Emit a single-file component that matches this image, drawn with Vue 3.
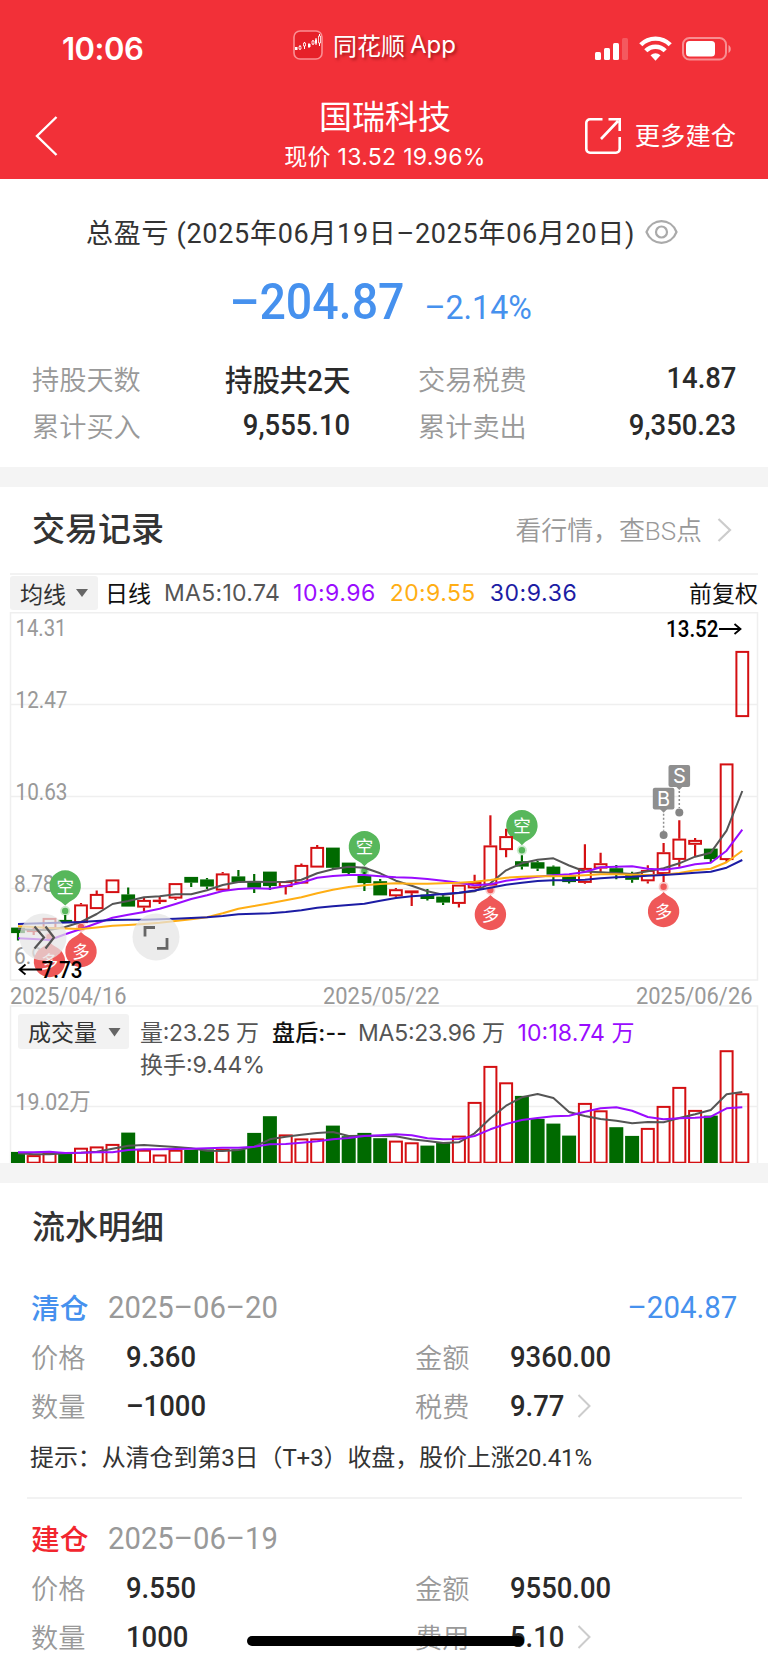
<template>
  <div class="page">
    <header class="top">
      <div class="status-bar">
        <div class="clock">10:06</div>
        <div class="app-tag">
          <svg class="app-icon" width="30" height="30" viewBox="0 0 30 30">
            <rect x="1" y="1" width="28" height="28" rx="6" fill="#e62129" stroke="#fa8f93" stroke-width="1.6" />
            <path d="M7 15v5M11.5 12v7M16 13v5M20 10v5M23 8v7M26.5 4v12" stroke="#fff" stroke-width="1" />
            <path d="M2 17h2.5v3H2zM15 14h2.5v3H15zM22 9.500h2v4h-2z" fill="#fff" />
            <path d="M6 16.500h2v2.500H6zM10.500 13h2v3h-2zM19 11h2v3h-2zM25.500 6h2v7h-2z" fill="#e62129" stroke="#fff" stroke-width=".8" />
          </svg>
          <span class="app-cn">同花顺</span>
          <span class="app-en">App</span>
        </div>
        <svg class="status-icons" width="138" height="26" viewBox="0 0 138 26">
          <rect x="1" y="17" width="6" height="8" rx="1.500" fill="#fff" />
          <rect x="10" y="13" width="6" height="12" rx="1.500" fill="#fff" />
          <rect x="19" y="8" width="6" height="17" rx="1.500" fill="#fff" />
          <rect x="28" y="3" width="6" height="22" rx="1.500" fill="#fff" fill-opacity=".2" />
          <g fill="none" stroke="#fff" stroke-width="4.400">
            <path d="M46.800 9.800a20.500 20.500 0 0 1 29.400 0" />
            <path d="M51.800 15.800a13.500 13.500 0 0 1 19.400 0" />
          </g>
          <path d="M56.500 20.300a8 8 0 0 1 10 0L61.500 25.800z" fill="#fff" />
          <rect x="89" y="3" width="43" height="21.500" rx="6.500" fill="none" stroke="#fff" stroke-opacity=".45" stroke-width="2" />
          <rect x="92" y="6" width="29" height="15.500" rx="3.500" fill="#fff" />
          <path d="M134.500 10v8c3-1.500 3-6.500 0-8z" fill="#fff" fill-opacity=".5" />
        </svg>
      </div>
      <div class="nav-bar">
        <svg class="back" width="26" height="44" viewBox="0 0 26 44">
          <path d="M22.500 3 3 22l19.500 19" fill="none" stroke="#fff" stroke-width="2.400" />
        </svg>
        <div class="nav-title">
          <div class="stock">国瑞科技</div>
          <div class="quote">现价 13.52 19.96%</div>
        </div>
        <div class="more">
          <svg width="38" height="38" viewBox="0 0 38 38" fill="none" stroke="#fff" stroke-width="2.600">
            <path d="M18.500 2.300H6A3.700 3.700 0 0 0 2.300 6v26A3.700 3.700 0 0 0 6 35.700h26a3.700 3.700 0 0 0 3.700-3.700V20" />
            <path d="M17 22 34 4M24.500 2.300h11.200V14" />
          </svg>
          <span>更多建仓</span>
        </div>
      </div>
    </header>

    <section class="summary">
      <div class="period">
        <span>总盈亏 (2025年06月19日–2025年06月20日)</span>
        <svg width="33" height="26" viewBox="0 0 33 26" fill="none" stroke="#aaa" stroke-width="2.200">
          <path d="M1.500 13C7-1.500 26-1.500 31.500 13 26 27.500 7 27.500 1.500 13z" />
          <circle cx="16.500" cy="13" r="5.500" />
        </svg>
      </div>
      <div class="profit">
        <span class="profit-value">–204.87</span>
        <span class="profit-rate">–2.14%</span>
      </div>
      <div class="stats">
        <div v-for="s in stats" :key="s.label" class="stat">
          <span class="label">{{ s.label }}</span>
          <span class="num">{{ s.value }}</span>
        </div>
      </div>
    </section>

    <section class="trades">
      <div class="section-head">
        <h2>交易记录</h2>
        <div class="link">
          <span>看行情，查BS点</span>
          <svg width="15" height="24" viewBox="0 0 15 24"><path d="M1.500 1 13 12 1.500 23" fill="none" stroke="#ccc" stroke-width="2.200" /></svg>
        </div>
      </div>
      <div class="ma-bar">
        <div class="chip">均线<i class="caret"></i></div>
        <span class="day">日线</span>
        <span class="ma5">MA5:10.74</span>
        <span class="ma10">10:9.96</span>
        <span class="ma20">20:9.55</span>
        <span class="ma30">30:9.36</span>
        <span class="adjust">前复权</span>
      </div>

      <svg class="chart" width="768" height="553" viewBox="0 610 768 553">
        <!-- frames and grid -->
        <g fill="none" stroke="#efefef" stroke-width="1.500">
          <path d="M10.500 1163V1006h747v157M10.500 612.700h747V980h-747z" />
          <path d="M10 704.500h748M10 796.500h748M10 888.500h748M10 1106.500h748" />
        </g>

        <!-- axis labels -->
        <g class="axis">
          <text
            v-for="a in axis"
            :key="a.t"
            :x="a.x"
            :y="a.y"
            :textLength="a.w"
            lengthAdjust="spacingAndGlyphs"
          >{{ a.t }}</text>
        </g>

        <!-- signal pins -->
        <g v-for="p in pins" :key="p.i">
          <path :d="pinPath(p)" :fill="p.up ? '#57b75b' : '#ef5858'" />
          <circle :cx="cx(p.i)" :cy="p.dot" r="5" :fill="p.up ? '#57b75b' : '#ef5858'" fill-opacity=".3" />
          <circle :cx="cx(p.i)" :cy="p.dot" r="3.200" :fill="p.up ? '#57b75b' : '#ef5858'" />
          <text class="pin-text" :x="cx(p.i)" :y="p.y + 6.5">{{ p.up ? '空' : '多' }}</text>
        </g>

        <!-- candles: [top, bottom, high, low, rising] -->
        <g v-for="(c, i) in candles" :key="'c' + i" :stroke="c[4] ? red : green" stroke-width="2.200">
          <path :d="`M${cx(i)} ${c[2]}V${c[0]}M${cx(i)} ${c[1]}V${c[3]}`" />
          <rect
            :x="cx(i) - 5.9"
            :y="c[0] + 0.9"
            width="11.8"
            :height="Math.max(c[1] - c[0] - 1.8, 0.4)"
            :fill="c[4] ? 'none' : green"
            stroke-width="2"
          />
        </g>
        <g fill="none" stroke-width="2" stroke-linejoin="round">
          <path :d="line(ma5)" stroke="#555" />
          <path :d="line(ma10)" stroke="#9a0cff" />
          <path :d="line(ma20)" stroke="#ffae14" />
          <path :d="line(ma30)" stroke="#1c1ca4" />
        </g>

        <!-- buy / sell flags -->
        <g v-for="f in flags" :key="f.t">
          <rect :x="cx(f.i) - 10.8" :y="f.y" width="21.600" height="21.800" rx="2" fill="#8f8f8f" />
          <path :d="`M${cx(f.i) - 4} ${f.y + 21}h8l-4 4z`" fill="#8f8f8f" />
          <path :d="`M${cx(f.i)} ${f.y + 26}v17`" stroke="#8f8f8f" stroke-width="1.500" stroke-dasharray="2 2" />
          <circle :cx="cx(f.i)" :cy="f.y + 47.3" r="4" fill="#858585" />
          <text class="flag-text" :x="cx(f.i)" :y="f.y + 18">{{ f.t }}</text>
        </g>

        <!-- floating buttons -->
        <g fill="#e4e4e4" fill-opacity=".72">
          <circle cx="43" cy="937" r="23.500" />
          <circle cx="156" cy="937" r="23.500" />
        </g>
        <path d="M34.500 926.500 44 937.500 34.500 948.500M45.500 926.500 54 937.500 45.500 948.500" fill="none" stroke="#555" stroke-width="2.200" />
        <path d="M145 936.500V927.500H155M167 938V948.300H157" fill="none" stroke="#666" stroke-width="2.800" />

        <!-- extreme price marks -->
        <g class="mark">
          <text x="41.500" y="977.800" textLength="41" lengthAdjust="spacingAndGlyphs">7.73</text>
          <text x="666" y="637" textLength="52.500" lengthAdjust="spacingAndGlyphs">13.52</text>
        </g>
        <path d="M42 969.500H20M25.500 964.500 19.500 969.500 25.500 974.500M719 629H740M734.500 624 740.500 629 734.500 634" fill="none" stroke="#000" stroke-width="1.800" />

        <!-- volume bars -->
        <rect
          v-for="(v, i) in volumes"
          :key="'v' + i"
          :x="cx(i) - 6"
          :y="v + 0.9"
          width="12"
          :height="1161.8 - v"
          :fill="candles[i][4] ? 'none' : green"
          :stroke="candles[i][4] ? red : green"
          stroke-width="2"
        />
        <g fill="none" stroke-width="2" stroke-linejoin="round">
          <path :d="line(volMa5)" stroke="#555" />
          <path :d="line(volMa10)" stroke="#9a0cff" />
        </g>

        <!-- volume legend -->
        <rect x="18" y="1014" width="111" height="35" rx="3" fill="#f2f2f2" />
        <path d="M108.500 1028h12l-6 8.500z" fill="#666" />
        <g class="legend">
          <text x="28" y="1040.500" textLength="69" fill="#333">成交量</text>
          <text x="140" y="1041" textLength="119">量:23.25 万</text>
          <text x="272" y="1041" textLength="75" fill="#111" class="strong">盘后:--</text>
          <text x="358" y="1041" textLength="147">MA5:23.96 万</text>
          <text x="517.500" y="1041" textLength="117" class="purple">10:18.74 万</text>
          <text x="140" y="1072.500" textLength="125">换手:9.44%</text>
        </g>
      </svg>
    </section>

    <section class="records">
      <h2>流水明细</h2>
      <div v-for="r in records" :key="r.date" class="record">
        <div class="record-head">
          <span class="kind" :class="r.cls">{{ r.kind }}</span>
          <span class="date">{{ r.date }}</span>
          <span class="gain">{{ r.gain }}</span>
        </div>
        <div v-for="(row, n) in r.rows" :key="n" class="record-row">
          <span class="label">{{ row[0] }}</span>
          <span class="num">{{ row[1] }}</span>
          <span class="label">{{ row[2] }}</span>
          <span class="num last">{{ row[3] }}</span>
          <svg v-if="n === 1" width="15" height="24" viewBox="0 0 15 24"><path d="M1.500 1 12.500 12 1.500 23" fill="none" stroke="#ccc" stroke-width="2" /></svg>
        </div>
        <div v-if="r.hint" class="hint">{{ r.hint }}</div>
      </div>
    </section>

    <div class="home-indicator"></div>
  </div>
</template>

<script setup>
const red = '#d40f12'
const green = '#006a00'

const stats = [
  { label: '持股天数', value: '持股共2天' },
  { label: '交易税费', value: '14.87' },
  { label: '累计买入', value: '9,555.10' },
  { label: '累计卖出', value: '9,350.23' }
]

const records = [
  {
    kind: '清仓',
    cls: 'sell',
    date: '2025–06–20',
    gain: '–204.87',
    rows: [
      ['价格', '9.360', '金额', '9360.00'],
      ['数量', '–1000', '税费', '9.77']
    ],
    hint: '提示：从清仓到第3日（T+3）收盘，股价上涨20.41%'
  },
  {
    kind: '建仓',
    cls: 'buy',
    date: '2025–06–19',
    gain: '',
    rows: [
      ['价格', '9.550', '金额', '9550.00'],
      ['数量', '1000', '费用', '5.10']
    ]
  }
]

const axis = [
  { t: '14.31', x: 15.5, y: 636, w: 51 },
  { t: '12.47', x: 15.5, y: 708, w: 52 },
  { t: '10.63', x: 15.5, y: 800, w: 52 },
  { t: '8.78', x: 14, y: 892, w: 40.5 },
  { t: '6.94', x: 14, y: 964, w: 40.5 },
  { t: '2025/04/16', x: 10, y: 1003.5, w: 116.5 },
  { t: '2025/05/22', x: 323, y: 1003.5, w: 116.5 },
  { t: '2025/06/26', x: 636, y: 1003.5, w: 116.5 },
  { t: '19.02万', x: 15.5, y: 1110, w: 75 }
]

// top, bottom, high, low, 1 = rising
const candles = [
  [927.7, 933, 927.7, 940.5, 0], [929, 932, 927, 935, 1], [918, 929, 918, 929, 1],
  [920, 923, 915, 923, 0], [904.5, 923, 903, 923, 1], [894, 909, 890.5, 909, 1],
  [879.5, 893, 879.5, 893, 1], [894.5, 906.5, 887.5, 906.5, 0], [900, 907.5, 898, 911.5, 1],
  [899.8, 901.6, 896.5, 904, 1], [883.2, 898.5, 883.2, 900, 1], [877, 882.6, 877, 887, 0],
  [879.5, 886.5, 878, 889, 0], [873.5, 890.5, 872, 890.5, 1], [876.5, 882, 870, 882, 0],
  [881.7, 887.7, 874, 893, 0], [871.7, 886, 871.7, 890, 0], [881.2, 887, 881.2, 894.5, 1],
  [865, 883.5, 863.5, 883.5, 1], [847, 867.5, 845, 867.5, 1], [847.7, 867.7, 847.7, 869, 0],
  [862.7, 873, 862.7, 874.5, 0], [875.3, 883, 872, 891, 0], [881.3, 895.3, 879, 895.3, 0],
  [889.3, 896.2, 888, 897.5, 1], [890.5, 893.2, 890.5, 906, 1], [894.7, 898.9, 889, 900.5, 0],
  [896.7, 902.5, 895, 905, 0], [884.7, 903.8, 884.7, 907.5, 1], [882, 888.3, 874.7, 889, 1],
  [845.5, 885.5, 815.3, 885.5, 1], [836.2, 850, 828.7, 857.3, 1], [861.3, 866.5, 855.3, 869.5, 0],
  [862.3, 868.5, 861, 871, 0], [866.7, 874.5, 865.5, 885.7, 0], [876, 882, 876, 883.5, 0],
  [868, 882.8, 844.3, 883.8, 1], [863.3, 868.5, 852.7, 872.7, 1], [868.3, 873.5, 865, 879.3, 0],
  [874.7, 879.7, 871.7, 882.7, 0], [870, 881.2, 865.3, 883.5, 1], [852.3, 874, 843, 882, 1],
  [838.7, 859.8, 820.3, 866.7, 1], [840, 844.7, 838, 856, 1], [848.7, 859, 848.7, 862, 0],
  [763.5, 860, 763.5, 862, 1], [651, 717, 651, 717, 1]
]

const volumes = [
  1152, 1155.2, 1152.5, 1153.7, 1147.8, 1146.5, 1144, 1132.7, 1149.8, 1154.6, 1149.8, 1150,
  1149.5, 1149, 1149.5, 1133, 1116.3, 1134.5, 1138.5, 1138.5, 1125.7, 1136.3, 1133, 1138.3,
  1140.7, 1142.4, 1145.7, 1143, 1135.7, 1102, 1066, 1082.4, 1096, 1119, 1123.7, 1135.7,
  1103, 1110.4, 1127.3, 1136, 1128, 1106, 1087, 1110, 1115.7, 1050.3, 1093.4
]

const ma5 = [
  929, 930, 930, 927, 922, 914, 904, 901, 897.3, 896.3, 894.3, 894.3, 890.3, 885, 882, 881.7,
  882, 881.7, 879.7, 873.3, 869.3, 866.7, 867.7, 873.3, 880.7, 885.7, 891.3, 894.7, 893, 891.3,
  883.3, 870.3, 863.3, 859.7, 858.3, 865.5, 871.5, 872.3, 873, 874, 871.3, 868.3, 863.3, 856.7,
  852.7, 830.7, 791
]
const ma10 = [
  938.3, 939, 940, 934.3, 929, 923.3, 917.7, 914.7, 912, 908.7, 904, 899, 895.3, 891, 889, 888.2,
  888.7, 886, 882.7, 877.7, 876, 875, 875, 876.3, 877.3, 877.7, 879, 880.7, 882.7, 885.3, 884.3,
  880.7, 878.7, 876.7, 875.3, 874.3, 872, 867.3, 866.7, 866.3, 868.7, 869.7, 867.7, 864.3, 862.7,
  850.7, 829.7
]
const ma20 = [
  926.3, 927, 928, 928.5, 929, 927.5, 925.7, 925, 924, 922.7, 921, 919.3, 917.3, 913.3, 908.7,
  906, 903.3, 900.3, 897.3, 893.3, 889.7, 887, 885.3, 884, 883.3, 883.7, 883.7, 883.3, 882.7,
  881.7, 880, 877.7, 876.7, 876.2, 876.2, 876, 875.3, 874.3, 874.3, 874.7, 875, 874.7, 873, 870.3,
  868.7, 862.3, 850.7
]
const ma30 = [
  924, 923.5, 923, 922.5, 922, 921, 920, 919.8, 919.7, 919.3, 918.7, 918, 917.3, 916, 914.3,
  913.8, 913.3, 912, 910.3, 907.7, 906.2, 905, 903.7, 900.7, 898, 896.3, 895.3, 894, 892.7, 890.5,
  887.7, 884.7, 882.7, 881, 880.3, 880.2, 879.7, 878.3, 877.3, 876.7, 875.7, 875, 874, 872.8,
  871.7, 867.7, 860
]
const volMa5 = [
  1153.3, 1154.3, 1154.3, 1153.3, 1152.7, 1151.7, 1148.7, 1145.7, 1145, 1146, 1147, 1148.3,
  1150.7, 1151, 1150, 1146.7, 1139.3, 1136.7, 1134.7, 1133, 1132, 1136, 1135.7, 1136, 1136.3,
  1139.3, 1141, 1143, 1142.3, 1133.3, 1118.3, 1105.7, 1097.3, 1094, 1098, 1112, 1116, 1119,
  1120.7, 1123.3, 1122, 1122.3, 1118, 1114.3, 1110, 1094.3, 1092
]
const volMa10 = [
  1152.3, 1152.3, 1151.7, 1153, 1152.7, 1152.3, 1152.3, 1150, 1149.3, 1149.3, 1149, 1148.7,
  1148.3, 1147.7, 1147.7, 1146.7, 1144.3, 1144, 1142.7, 1141.3, 1139.3, 1138, 1136, 1135.3,
  1134.3, 1135.3, 1138.3, 1139.3, 1139, 1136, 1129.3, 1124, 1120, 1118, 1116.3, 1115.7, 1111.7,
  1108.3, 1107.3, 1110.7, 1117, 1119.3, 1118.3, 1117.7, 1116.7, 1108.3, 1107.3
]

const pins = [
  { i: 3, y: 886, dot: 911, up: true },
  { i: 22, y: 846.7, dot: 871, up: true },
  { i: 32, y: 825.7, dot: 850.3, up: true },
  { i: 2, y: 961.5, dot: 937, up: false },
  { i: 4, y: 951.5, dot: 927, up: false },
  { i: 30, y: 914.5, dot: 890, up: false },
  { i: 41, y: 911.5, dot: 886.7, up: false }
]

const flags = [
  { i: 41, y: 787.7, t: 'B' },
  { i: 42, y: 765.1, t: 'S' }
]

const cx = (i) => +(18 + i * 15.746).toFixed(1)

const line = (arr) => 'M' + arr.map((y, i) => `${cx(i)} ${y}`).join('L')

// round pin with the tip pointing down (空) or up (多)
const pinPath = (p) => {
  const x = cx(p.i)
  const s = p.up ? 1 : -1
  const y = p.y
  return `M${x - 9} ${y + s * 12.9}A15.700 15.700 0 1 ${p.up ? 1 : 0} ${x + 9} ${y + s * 12.9}Q${x + 3} ${y + s * 16} ${x} ${y + s * 19.500}Q${x - 3} ${y + s * 16} ${x - 9} ${y + s * 12.9}z`
}
</script>

<style>
body {
  margin: 0;
  background: #fff;
}
</style>

<style scoped>
.page {
  position: relative;
  width: 768px;
  height: 1663px;
  overflow: hidden;
  background: #fff;
  color: #333;
  font-family: Roboto, 'Noto Sans CJK SC', sans-serif;
  white-space: nowrap;
}

h2 {
  margin: 0;
  font-size: 33px;
  font-weight: 500;
  line-height: 40px;
}

/* header */
.top {
  height: 179px;
  background: #f23038;
  color: #fff;
}

.status-bar {
  display: flex;
  align-items: center;
  height: 92px;
  padding: 0 36px 0 62px;
}

.clock {
  width: 231px;
  padding-top: 4px;
  font-family: Inter, sans-serif;
  font-size: 31px;
  font-weight: 600;
  letter-spacing: -0.5px;
}

.app-tag {
  display: flex;
  align-items: center;
  flex: 1;
  padding-bottom: 3px;
  font-size: 24px;
  text-shadow: 2px 2px 3px rgba(90, 0, 0, 0.5);
}

.app-cn {
  margin: 0 5px 0 10px;
}

.app-en {
  font-family: Inter, sans-serif;
}

.status-icons {
  margin-top: 4px;
}

.nav-bar {
  display: flex;
  align-items: center;
  justify-content: space-between;
  height: 87px;
  padding: 0 32px 0 34px;
}

.nav-title {
  margin-left: 126px;
  padding-top: 2px;
  text-align: center;
}

.stock {
  font-size: 33px;
  line-height: 40px;
}

.quote {
  font-family: Inter, 'Noto Sans CJK SC', sans-serif;
  font-size: 23px;
  line-height: 38px;
  letter-spacing: 0.3px;
}

.more {
  display: flex;
  align-items: center;
  gap: 13px;
  font-size: 25.3px;
}

.more span {
  margin-top: -3px;
}

/* summary */
.summary {
  height: 288px;
}

.period {
  display: flex;
  align-items: center;
  gap: 10px;
  height: 52px;
  padding: 27px 0 0 86px;
  font-size: 27px;
}

.period span {
  margin-top: -1px;
  letter-spacing: 0.7px;
}

.profit {
  display: flex;
  align-items: baseline;
  justify-content: center;
  gap: 24px;
  height: 76px;
  margin: 6px 0;
  color: #4691ee;
  font-weight: 500;
}

.profit-value {
  font-size: 50px;
  line-height: 76px;
  transform: scaleX(0.93);
}

.profit-rate {
  margin: 0 12px 0 -12px;
  font-size: 33px;
  font-weight: 400;
  transform: scaleX(0.975);
}

.stats {
  display: grid;
  grid-template-columns: 318px 318px;
  column-gap: 68px;
  padding: 8px 32px 0 32px;
}

.stat {
  display: flex;
  align-items: center;
  justify-content: space-between;
  height: 47px;
}

.label {
  color: #999;
  font-size: 27.2px;
  font-weight: 350;
}

/* condensed figures */
.num {
  color: #2a2a2a;
  font-size: 29.2px;
  font-weight: 500;
  transform: scaleX(0.94);
  transform-origin: right;
}

/* trades */
.trades {
  border-top: 20px solid #f4f4f4;
}

.section-head {
  display: flex;
  align-items: center;
  justify-content: space-between;
  height: 86px;
  padding: 0 36px 0 32px;
}

.link {
  display: flex;
  align-items: center;
  gap: 15px;
  color: #999;
  font-size: 25.9px;
  font-weight: 350;
}

.link span {
  margin-top: -3px;
}

.ma-bar {
  display: flex;
  align-items: center;
  height: 35px;
  margin: 0 10px;
  border-top: 2px solid #f2f2f2;
  font-family: Inter, 'Noto Sans CJK SC', sans-serif;
  font-size: 23px;
}

.chip {
  display: flex;
  align-items: center;
  width: 78px;
  height: 34px;
  padding-left: 10px;
  border-radius: 3px;
  background: #f2f2f2;
}

.caret {
  margin-left: 10px;
  border: 6px solid transparent;
  border-top: 8.5px solid #666;
  border-bottom: 0;
}

.day {
  margin: -2px 0 0 7px;
  color: #111;
}

.ma5 {
  margin-left: 13px;
  color: #555;
  letter-spacing: 0.3px;
}

.ma10 {
  margin-left: 13px;
  color: #9a0cff;
  letter-spacing: 0.5px;
}

.ma20 {
  margin-left: 14px;
  color: #ffae14;
  letter-spacing: 0.4px;
}

.ma30 {
  margin-left: 14px;
  color: #1c1ca4;
  letter-spacing: 0.6px;
}

.adjust {
  margin: -2px 0 0 auto;
  color: #111;
}

.chart {
  display: block;
}

.axis {
  fill: #999;
  font-size: 23.8px;
}

.pin-text,
.flag-text {
  fill: #fff;
  font-size: 17.5px;
  text-anchor: middle;
}

.flag-text {
  font-family: Inter, sans-serif;
  font-size: 20px;
}

.mark {
  fill: #000;
  font-size: 23.5px;
  font-weight: 500;
}

.legend {
  fill: #555;
  font-family: Inter, 'Noto Sans CJK SC', sans-serif;
  font-size: 23px;
}

.strong {
  font-weight: 500;
}

.purple {
  fill: #9a0cff;
}

/* records */
.records {
  border-top: 20px solid #f4f4f4;
  padding-top: 25px;
}

.records h2 {
  padding-left: 32px;
}

.record {
  height: 229px;
  margin: 0 26px 0 27px;
  border-bottom: 2px solid #f2f2f2;
}

.record:nth-of-type(1) {
  margin-top: 20px;
}

.record-head {
  display: flex;
  align-items: center;
  height: 52px;
  padding: 13px 5px 0 4px;
  font-size: 32px;
}

.kind {
  width: 77px;
  margin-top: -2px;
  font-size: 28.7px;
  font-weight: 500;
}

.sell,
.gain {
  color: #4691ee;
}

.buy {
  color: #f2262e;
}

.date {
  color: #999;
  transform: scaleX(0.914);
  transform-origin: left;
}

.gain {
  margin-left: auto;
  transform: scaleX(0.92);
  transform-origin: right;
}

.record-row {
  display: flex;
  align-items: center;
  height: 48.5px;
  padding-left: 4px;
}

.record-row .label {
  width: 95px;
  margin-top: -2px;
}

.record-row .num {
  width: 289px;
  transform-origin: left;
}

.record-row .last {
  width: auto;
  margin-right: 9px;
}

.hint {
  padding-left: 3px;
  font-size: 24px;
  line-height: 56px;
  letter-spacing: -0.1px;
}

.home-indicator {
  position: absolute;
  left: 247px;
  top: 1636px;
  width: 277px;
  height: 10px;
  border-radius: 5px;
  background: #000;
}
</style>
